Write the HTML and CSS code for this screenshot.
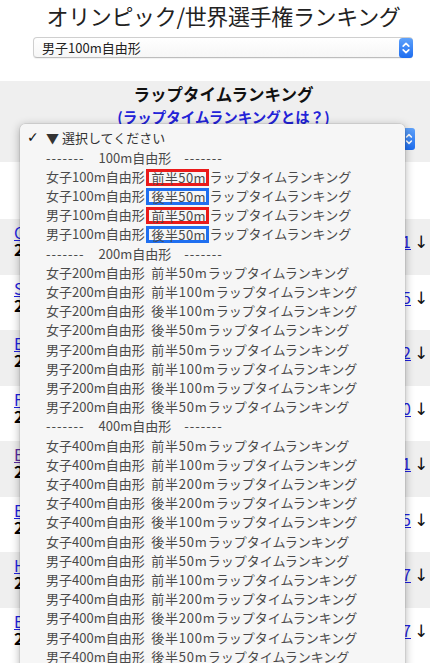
FILE: index.html
```html
<!DOCTYPE html>
<html lang="ja">
<head>
<meta charset="utf-8">
<title>オリンピック/世界選手権ランキング</title>
<link rel="stylesheet" href="styles.css">
</head>
<body>
<h1 class="title">オリンピック/世界選手権ランキング</h1>
<div class="event-select">
  <span class="select-text">男子100m自由形</span>
  <span class="stepper"><svg width="14" height="20" viewBox="0 0 14 20"><defs><linearGradient id="sg" x1="0" y1="0" x2="0" y2="1"><stop offset="0" stop-color="#5fa2fb"/><stop offset="1" stop-color="#1d6df0"/></linearGradient></defs><rect x="0" y="0" width="14" height="20" rx="3.5" fill="url(#sg)"/><path d="M4.2 8.2 L7 5.4 L9.8 8.2" fill="none" stroke="#fff" stroke-width="1.7" stroke-linecap="round" stroke-linejoin="round"/><path d="M4.2 11.8 L7 14.6 L9.8 11.8" fill="none" stroke="#fff" stroke-width="1.7" stroke-linecap="round" stroke-linejoin="round"/></svg></span>
</div>
<section class="lap">
  <h2 class="lap-title">ラップタイムランキング</h2>
  <a class="lap-help" href="#">(ラップタイムランキングとは？)</a>
  <div class="lap-select">
    <span class="select-text">▼ 選択してください</span>
    <span class="stepper"><svg width="12" height="22" viewBox="0 0 12 22"><defs><linearGradient id="sg2" x1="0" y1="0" x2="0" y2="1"><stop offset="0" stop-color="#5fa2fb"/><stop offset="1" stop-color="#1d6df0"/></linearGradient></defs><rect x="0" y="0" width="12" height="22" rx="3" fill="url(#sg2)"/><path d="M3.6 9 L6 6.6 L8.4 9" fill="none" stroke="#fff" stroke-width="1.6" stroke-linecap="round" stroke-linejoin="round"/><path d="M3.6 13 L6 15.4 L8.4 13" fill="none" stroke="#fff" stroke-width="1.6" stroke-linecap="round" stroke-linejoin="round"/></svg></span>
  </div>
</section>
<div class="ranking">
  <div class="rank-row head"><div class="player">&nbsp;</div><div class="rec">&nbsp;</div></div>
  <div class="rank-row"><div class="player"><a href="#">Cesar Cielo Filho</a><br><b>2009</b> 世界選手権ローマ</div><div class="rec"><a href="#">22.41</a><span class="arrow">↓</span></div></div>
  <div class="rank-row"><div class="player"><a href="#">Sebastian Rouault</a><br><b>2009</b> 世界選手権ローマ</div><div class="rec"><a href="#">22.55</a><span class="arrow">↓</span></div></div>
  <div class="rank-row"><div class="player"><a href="#">Eamon Sullivan</a><br><b>2008</b> 北京オリンピック</div><div class="rec"><a href="#">22.62</a><span class="arrow">↓</span></div></div>
  <div class="rank-row"><div class="player"><a href="#">Frederick Bousquet</a><br><b>2009</b> 世界選手権ローマ</div><div class="rec"><a href="#">22.70</a><span class="arrow">↓</span></div></div>
  <div class="rank-row"><div class="player"><a class="visited" href="#">Eamon Sullivan</a><br><b>2009</b> 世界選手権ローマ</div><div class="rec"><a href="#">22.71</a><span class="arrow">↓</span></div></div>
  <div class="rank-row"><div class="player"><a href="#">Eamon Sullivan</a><br><b>2008</b> 北京オリンピック</div><div class="rec"><a href="#">22.75</a><span class="arrow">↓</span></div></div>
  <div class="rank-row"><div class="player"><a href="#">Hanser Garcia</a><br><b>2015</b> 世界選手権カザン</div><div class="rec"><a href="#">22.77</a><span class="arrow">↓</span></div></div>
  <div class="rank-row"><div class="player"><a href="#">Eamon Sullivan</a><br><b>2008</b> 北京オリンピック</div><div class="rec"><a href="#">22.77</a><span class="arrow">↓</span></div></div>
</div>
<div class="menu">
  <div class="menu-item first"><span class="check">✓</span>▼ 選択してください</div>
  <div class="menu-item"><span class="dash">-------</span><span class="sep-label">100m自由形</span><span class="dash">-------</span></div>
  <div class="menu-item">女子100m自由形<span class="mark red">前半50m</span>ラップタイムランキング</div>
  <div class="menu-item">女子100m自由形<span class="mark blue">後半50m</span>ラップタイムランキング</div>
  <div class="menu-item">男子100m自由形<span class="mark red">前半50m</span>ラップタイムランキング</div>
  <div class="menu-item">男子100m自由形<span class="mark blue">後半50m</span>ラップタイムランキング</div>
  <div class="menu-item"><span class="dash">-------</span><span class="sep-label">200m自由形</span><span class="dash">-------</span></div>
  <div class="menu-item">女子200m自由形<span class="seg">前半50m</span>ラップタイムランキング</div>
  <div class="menu-item">女子200m自由形<span class="seg">前半100m</span>ラップタイムランキング</div>
  <div class="menu-item">女子200m自由形<span class="seg">後半100m</span>ラップタイムランキング</div>
  <div class="menu-item">女子200m自由形<span class="seg">後半50m</span>ラップタイムランキング</div>
  <div class="menu-item">男子200m自由形<span class="seg">前半50m</span>ラップタイムランキング</div>
  <div class="menu-item">男子200m自由形<span class="seg">前半100m</span>ラップタイムランキング</div>
  <div class="menu-item">男子200m自由形<span class="seg">後半100m</span>ラップタイムランキング</div>
  <div class="menu-item">男子200m自由形<span class="seg">後半50m</span>ラップタイムランキング</div>
  <div class="menu-item"><span class="dash">-------</span><span class="sep-label">400m自由形</span><span class="dash">-------</span></div>
  <div class="menu-item">女子400m自由形<span class="seg">前半50m</span>ラップタイムランキング</div>
  <div class="menu-item">女子400m自由形<span class="seg">前半100m</span>ラップタイムランキング</div>
  <div class="menu-item">女子400m自由形<span class="seg">前半200m</span>ラップタイムランキング</div>
  <div class="menu-item">女子400m自由形<span class="seg">後半200m</span>ラップタイムランキング</div>
  <div class="menu-item">女子400m自由形<span class="seg">後半100m</span>ラップタイムランキング</div>
  <div class="menu-item">女子400m自由形<span class="seg">後半50m</span>ラップタイムランキング</div>
  <div class="menu-item">男子400m自由形<span class="seg">前半50m</span>ラップタイムランキング</div>
  <div class="menu-item">男子400m自由形<span class="seg">前半100m</span>ラップタイムランキング</div>
  <div class="menu-item">男子400m自由形<span class="seg">前半200m</span>ラップタイムランキング</div>
  <div class="menu-item">男子400m自由形<span class="seg">後半200m</span>ラップタイムランキング</div>
  <div class="menu-item">男子400m自由形<span class="seg">後半100m</span>ラップタイムランキング</div>
  <div class="menu-item">男子400m自由形<span class="seg">後半50m</span>ラップタイムランキング</div>
</div>
</body>
</html>
```
FILE: styles.css
```css
html { overflow: hidden; }
body {
  margin: 0;
  font-family: "Noto Sans CJK JP", "Noto Sans", sans-serif;
  color: #111;
  background: #fff;
  position: relative;
}
.title {
  margin: 0;
  padding-left: 17px;
  font-size: 22px;
  font-weight: 400;
  letter-spacing: -0.35px;
  line-height: 30px;
  text-align: center;
  color: #222;
}
.event-select {
  margin: 7px 17px 0 33px;
  height: 21px;
  box-sizing: border-box;
  border: 1px solid #cfcfcf;
  border-bottom-color: #bdbdbd;
  border-radius: 4px;
  background: linear-gradient(#ffffff, #f6f6f6);
  box-shadow: 0 1px 1px rgba(0,0,0,0.06);
  display: flex;
  align-items: center;
  justify-content: space-between;
  padding-left: 8px;
}
.select-text {
  font-size: 13px;
  line-height: 19px;
  color: #222;
}
.stepper { display: flex; margin-right: -1px; }
.stepper svg { display: block; }
.lap {
  margin-top: 23px;
  background: #efefef;
  padding: 2px 0 0 17px;
  height: 81px;
  box-sizing: border-box;
  display: flex;
  flex-direction: column;
  align-items: center;
}
.lap-title {
  margin: 0;
  font-size: 16.5px;
  font-weight: 700;
  line-height: 23px;
  color: #111;
}
.lap-help {
  font-size: 14.5px;
  font-weight: 700;
  line-height: 22px;
  color: #2323d8;
  text-decoration: none;
}
.lap-select {
  align-self: stretch;
  margin: 0 15px 0 3px;
  height: 22px;
  box-sizing: border-box;
  border: 1px solid #cfcfcf;
  border-radius: 4px;
  background: #fff;
  display: flex;
  align-items: center;
  justify-content: space-between;
  padding-left: 8px;
}
.ranking { display: flex; flex-direction: column; }
.rank-row {
  height: 55.5px;
  flex: none;
  box-sizing: border-box;
  padding: 5px 2px 0 14px;
  display: flex;
  justify-content: space-between;
  font-size: 16px;
  line-height: 17px;
  background: #fff;
}
.rank-row.head { height: 57px; }
.rank-row:nth-child(even) { background: #efefef; }
.player { white-space: nowrap; }
.player a, .rec a { color: #1f1fe0; text-decoration: underline; }
.player a.visited { color: #5b2a9c; }
.player b { font-weight: 700; color: #000; }
.rec { padding-top: 9px; white-space: nowrap; }
.arrow {
  display: inline-block;
  width: 14px;
  margin-left: 3px;
  text-align: center;
  color: #111;
  font-family: "DejaVu Sans", sans-serif;
  font-size: 17px;
}
.menu {
  position: absolute;
  left: 20px;
  top: 124px;
  width: 385px;
  height: 570px;
  box-sizing: border-box;
  padding-top: 4.4px;
  background: #f6f6f6;
  border-radius: 5px;
  box-shadow: 0 2px 10px rgba(0,0,0,0.32), 0 0 0 0.5px rgba(0,0,0,0.12);
  font-size: 13px;
  line-height: 19.2px;
  color: #4a4a4a;
}
.menu-item {
  position: relative;
  padding-left: 26px;
  white-space: nowrap;
}
.menu-item.first { color: #333; }
.check {
  position: absolute;
  left: 7px;
  top: 0;
  color: #111;
  font-family: "DejaVu Sans", sans-serif;
  font-weight: 700;
  font-size: 14px;
}
.dash { letter-spacing: 1px; }
.sep-label { margin: 0 13px 0 14px; }
.seg {
  margin-left: 6.5px;
  letter-spacing: 0.8px;
}
.mark {
  display: inline-block;
  line-height: 11px;
  border: 3px solid;
  letter-spacing: 0.4px;
  padding: 0 0 0 2.3px;
  margin: 0 0.5px 0 1.5px;
  vertical-align: -1px;
}
.mark.red { border-color: #ea1a1a; }
.mark.blue { border-color: #1f6ff0; }
```
